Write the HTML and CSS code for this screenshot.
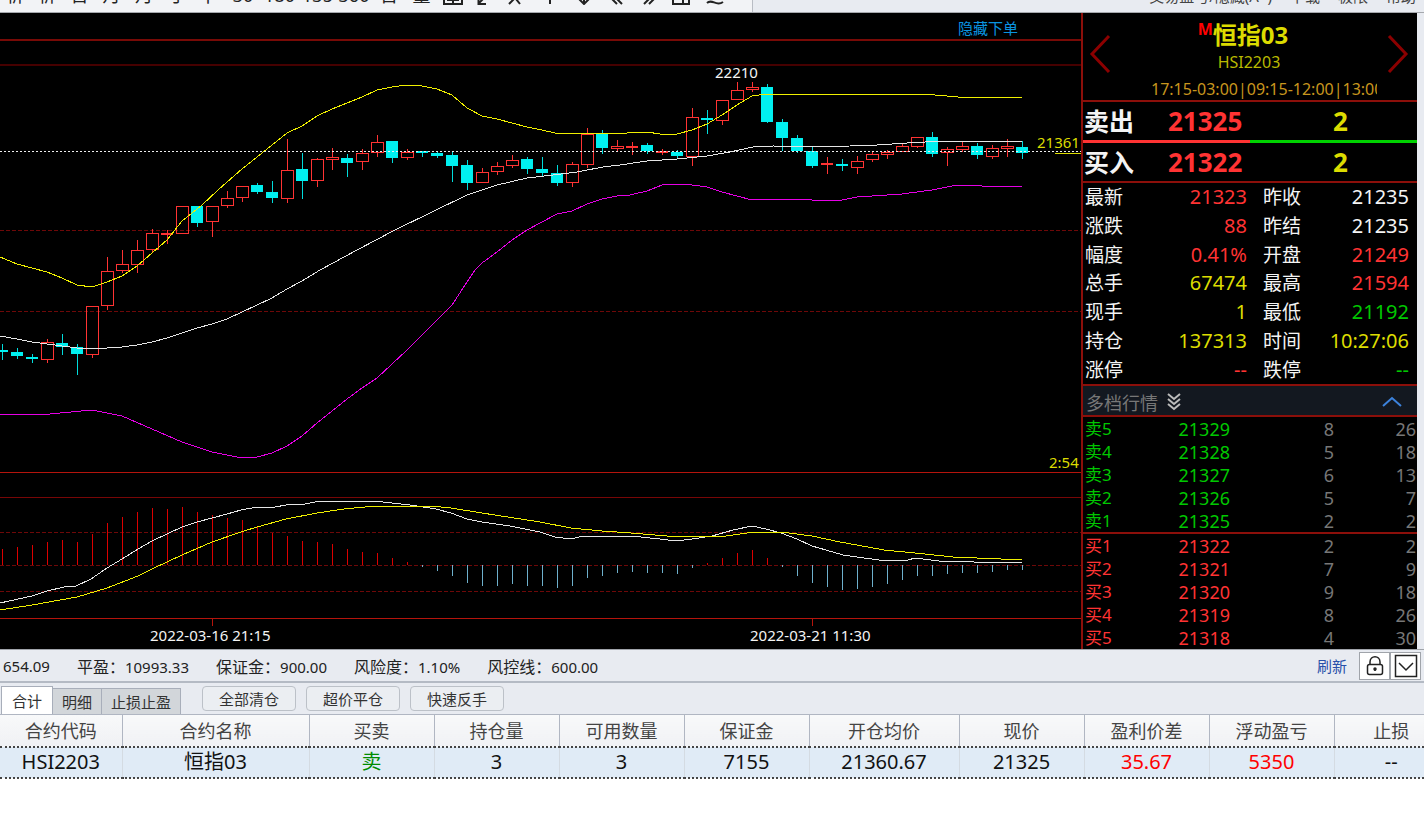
FILE: index.html
```html
<!DOCTYPE html>
<html lang="zh-CN">
<head>
<meta charset="utf-8">
<title>恒指03</title>
<link rel="stylesheet" href="styles.css">
</head>
<body>
<header class="topbar">
  <nav class="tools">
    <button>析</button><button>析</button><button>日</button><button>月</button><button>月</button><button>寸</button><button>十</button>
    <button>30</button><button>180</button><button>135</button><button>360</button><button>日</button><button>量</button>
    <button><svg width="20" height="16"><path d="M1 0V15H19V0M10 0V15M4 11H16"/></svg></button>
    <button><svg width="12" height="14"><path d="M11 3L2 12M1.500 5V13H9"/></svg></button>
    <button><svg width="14" height="14"><path d="M1 13L12 2M8 8L12 13"/></svg></button>
    <button><svg width="8" height="14"><path d="M4 0V13"/></svg></button>
    <button><svg width="12" height="15"><path d="M6 0V14M1 9L6 14L11 9"/></svg></button>
    <button><svg width="12" height="14"><path d="M6 13L1 8L6 3M11 13L6 8L11 3"/></svg></button>
    <button><svg width="12" height="14"><path d="M1 13L6 8L1 3M6 13L11 8L6 3"/></svg></button>
    <button><svg width="18" height="14"><path d="M1 1V13H17V1M11 1V13"/></svg></button>
    <button><svg width="18" height="14"><path d="M1 12C6 7 10 16 17 11"/></svg></button>
  </nav>
  <nav class="menu">
    <a href="#">交易盈亏/隐藏(A+)</a><a href="#">下载</a><a href="#">极限</a><a href="#">帮助</a>
  </nav>
</header>

<main class="market">
  <section class="chart">
    <svg id="chart" viewBox="0 13 1081 636" preserveAspectRatio="xMaxYMin slice" role="img" aria-label="K线图">
      <g class="frame">
        <path class="strong" d="M0 472.500H1081M0 618.500H1081M212.500 619V626M812.500 619V626"/>
        <path class="edge" d="M0 40H1081"/>
        <path class="soft" d="M0 65H1081"/>
        <path class="soft-thin" d="M0 497.500H1081"/>
        <path class="dash" d="M0 230.500H1081M0 311.500H1081M0 532.500H1081M0 565.500H1081M0 591.500H1081"/>
      </g>
      <g id="bars"></g>
      <g id="candles"></g>
      <g id="lines"></g>
      <path class="last" d="M0 151.500H1081"/>
      <path class="mark" d="M1055 153.500H1081"/>
      <text class="t-white" x="715" y="78">22210</text>
      <text class="t-yellow" x="1037" y="148">21361</text>
      <text class="t-yellow" x="1049" y="468">2:54</text>
      <text class="t-blue" x="958" y="34">隐藏下单</text>
      <text class="t-white" x="150" y="641">2022-03-16 21:15</text>
      <text class="t-white" x="750" y="641">2022-03-21 11:30</text>
    </svg>
  </section>

  <aside class="quote">
    <div class="title">
      <button class="arrow" aria-label="上一个"><svg width="24" height="40"><path d="M21 2L4 20L21 38"/></svg></button>
      <div class="names">
        <h1><sup>M</sup>恒指03</h1>
        <p class="code">HSI2203</p>
        <p class="hours">17:15-03:00|09:15-12:00|13:00-16:30</p>
      </div>
      <button class="arrow" aria-label="下一个"><svg width="24" height="40"><path d="M3 2L20 20L3 38"/></svg></button>
    </div>
    <div class="deal"><span>卖出</span><b class="red">21325</b><b class="yellow">2</b></div>
    <div class="ratio"></div>
    <div class="deal"><span>买入</span><b class="red">21322</b><b class="yellow">2</b></div>
    <table class="stats">
      <tr><th>最新</th><td class="red">21323</td><th>昨收</th><td>21235</td></tr>
      <tr><th>涨跌</th><td class="red">88</td><th>昨结</th><td>21235</td></tr>
      <tr><th>幅度</th><td class="red">0.41%</td><th>开盘</th><td class="red">21249</td></tr>
      <tr><th>总手</th><td class="yellow">67474</td><th>最高</th><td class="red">21594</td></tr>
      <tr><th>现手</th><td class="yellow">1</td><th>最低</th><td class="green">21192</td></tr>
      <tr><th>持仓</th><td class="yellow">137313</td><th>时间</th><td class="yellow">10:27:06</td></tr>
      <tr><th>涨停</th><td class="red">--</td><th>跌停</th><td class="green">--</td></tr>
    </table>
    <button class="levels">
      <span>多档行情</span>
      <svg class="more" width="14" height="18"><path d="M1 1L7 6L13 1M1 6L7 11L13 6M1 11L7 16L13 11"/></svg>
      <svg class="fold" width="20" height="12"><path d="M1 10L10 2L19 10"/></svg>
    </button>
    <table class="depth green">
      <tr><th>卖5</th><td>21329</td><td>8</td><td>26</td></tr>
      <tr><th>卖4</th><td>21328</td><td>5</td><td>18</td></tr>
      <tr><th>卖3</th><td>21327</td><td>6</td><td>13</td></tr>
      <tr><th>卖2</th><td>21326</td><td>5</td><td>7</td></tr>
      <tr><th>卖1</th><td>21325</td><td>2</td><td>2</td></tr>
    </table>
    <table class="depth bids red">
      <tr><th>买1</th><td>21322</td><td>2</td><td>2</td></tr>
      <tr><th>买2</th><td>21321</td><td>7</td><td>9</td></tr>
      <tr><th>买3</th><td>21320</td><td>9</td><td>18</td></tr>
      <tr><th>买4</th><td>21319</td><td>8</td><td>26</td></tr>
      <tr><th>买5</th><td>21318</td><td>4</td><td>30</td></tr>
    </table>
  </aside>
</main>

<section class="account">
  <span>654.09</span><span><i>平盈：</i>10993.33</span><span><i>保证金：</i>900.00</span><span><i>风险度：</i>1.10%</span><span><i>风控线：</i>600.00</span>
  <a class="refresh" href="#">刷新</a>
  <div class="keys">
    <button aria-label="锁定"><svg width="18" height="22"><rect x="1.500" y="9.500" width="15" height="10" rx="2"/><path d="M4 9V7C4 0 14 0 14 7V9M9 13V16"/><circle cx="9" cy="14" r="1"/></svg></button>
    <button aria-label="展开"><svg width="24" height="24"><rect x="1.500" y="1.500" width="21" height="21"/><path d="M5 9L12 16L19 9"/></svg></button>
  </div>
</section>

<section class="tabs">
  <button class="tab on">合计</button><button class="tab">明细</button><button class="tab">止损止盈</button>
  <div class="actions"><button>全部清仓</button><button>超价平仓</button><button>快速反手</button></div>
</section>

<table class="positions">
  <colgroup><col class="c-code"><col class="c-name"><col class="c-std"><col class="c-std"><col class="c-std"><col class="c-std"><col class="c-avg"><col class="c-std"><col class="c-std"><col class="c-std"><col></colgroup>
  <thead><tr><th>合约代码</th><th>合约名称</th><th>买卖</th><th>持仓量</th><th>可用数量</th><th>保证金</th><th>开仓均价</th><th>现价</th><th>盈利价差</th><th>浮动盈亏</th><th>止损</th></tr></thead>
  <tbody><tr><td>HSI2203</td><td>恒指03</td><td class="sell">卖</td><td>3</td><td>3</td><td>7155</td><td>21360.67</td><td>21325</td><td class="gain">35.67</td><td class="gain">5350</td><td>--</td></tr></tbody>
</table>
<script src="chart.js"></script>
</body>
</html>
```

FILE: styles.css
```css
* { box-sizing: border-box; }
body { margin: 0; background: #fff; font-family: "Noto Sans", "Noto Sans CJK SC", sans-serif; color: #222; }
button { font: inherit; color: inherit; margin: 0; padding: 0; border: 0; background: none; }
a { color: inherit; text-decoration: none; }
svg { fill: none; stroke: currentColor; }
table { border-collapse: collapse; border-spacing: 0; }
th { font-weight: 400; }
h1, p { margin: 0; }

.red { color: #f33; }
.yellow { color: #dcdc00; }
.green { color: #00c800; }

.topbar { display: flex; justify-content: space-between; height: 13px; overflow: hidden; background: #e8ebf1; border-bottom: 1px solid #a5a8ad; }
.tools {
  display: grid; align-items: end; justify-items: center; align-content: end;
  grid-template-columns: 30px 34px 31px 33px 32px 30px 36px 34px 39px 37px 36px 34px 31px 31px 30px 34px 36px 32px 34px 30px 34px 34px;
  padding: 0 20px 7px 0; background: #f2f3f6; border-right: 1px solid #b8bcc4; font-size: 18px; line-height: 20px; color: #222;
}
.tools svg { display: block; stroke-width: 2; }
.menu { display: flex; align-items: flex-end; gap: 18px; padding: 0 8px 7px 0; font-size: 15px; line-height: 18px; color: #444; }

.market { display: grid; grid-template-columns: minmax(0, 1fr) 336px; padding-right: 7px; background: #e8ebf1; }
.chart { background: #000; }
#chart { display: block; width: 100%; height: 636px; }
.frame, #bars, #candles, #lines, .last, .mark { shape-rendering: crispEdges; }
.strong { stroke: #b4140c; }
.edge { stroke: #780a06; stroke-width: 2; }
.soft { stroke: #460000; stroke-width: 2; }
.soft-thin { stroke: #780606; }
.dash { stroke: #6e0808; stroke-dasharray: 4 2; }
.last { stroke: #eee; stroke-dasharray: 2 2; }
.mark { stroke: #dcdc00; }
#chart text { font-size: 15px; stroke: none; }
#chart .t-white { fill: #f4f4f4; }
#chart .t-yellow { fill: #dcdc00; }
#chart .t-blue { fill: #0a94e0; }
.up { stroke: #f33; }
.flat { fill: #f33; stroke: none; }
.down { fill: #00f0f0; stroke: none; }
.wick-up { stroke: #f33; }
.wick-down { stroke: #00dcdc; }
.gain-bar { stroke: #dc0000; }
.loss-bar { stroke: #6eb0cc; }
.upper, .dea { stroke: #f0f000; }
.middle, .dif { stroke: #e6e6e6; }
.lower { stroke: #e600e6; }

.quote { background: #000; color: #f4f4f4; border-left: 2px solid #8c0f0a; }
.title { display: grid; grid-template-columns: 24px minmax(0, 1fr) 24px; align-items: center; height: 89px; padding: 0 7px 0 5px; border-bottom: 2px solid #8c0f0a; }
.arrow { color: #8c0000; padding-bottom: 5px; }
.arrow svg { display: block; stroke-width: 3; }
.names { text-align: center; }
.names h1 { display: flex; justify-content: center; font-size: 24px; line-height: 32px; color: #dcdc00; padding: 6px 12px 0 0; }
.names sup { font-size: 16px; line-height: 20px; color: #f00; }
.code { font-size: 16px; line-height: 22px; color: #b9b900; }
.hours { margin: 5px 9px 0 39px; font-size: 16px; line-height: 22px; text-align: left; white-space: nowrap; overflow: hidden; color: #c8961e; }
.deal { display: grid; grid-template-columns: 84px 165px 1fr; align-items: center; height: 38px; padding-left: 1px; font-size: 26px; line-height: 36px; }
.deal span { font-size: 25px; font-weight: 700; }
.ratio { height: 3px; background: linear-gradient(to right, #f33 50%, #00d200 50%); }
.stats { width: 100%; height: 205px; table-layout: fixed; border-top: 2px solid #8c0f0a; border-bottom: 2px solid #8c0f0a; font-size: 20px; line-height: 26px; }
.stats th { width: 58px; padding: 0 0 0 2px; text-align: left; font-size: 19px; }
.stats th:nth-child(3) { width: 60px; padding-left: 14px; }
.stats td { padding: 0 2px 0 0; text-align: right; }
.stats td:nth-child(2) { width: 108px; }
.stats td:last-child { padding-right: 8px; }
.levels { display: flex; align-items: center; width: 100%; height: 29px; padding: 2px 15px 0 3px; gap: 9px; background: #131820; color: #777; font-size: 18px; }
.more { color: #bbb; stroke-width: 2; }
.fold { margin-left: auto; color: #3c82dc; stroke-width: 2; }
.depth { width: 100%; height: 117px; table-layout: fixed; border-top: 2px solid #8c0f0a; font-size: 18px; line-height: 22px; }
.depth th { width: 60px; padding: 1px 0 0 2px; text-align: left; font-size: 17px; }
.depth td { padding: 1px 0 0; text-align: right; }
.depth td:nth-child(2) { width: 87px; }
.depth td:nth-child(3) { width: 104px; color: #777; }
.depth td:nth-child(4) { padding-right: 1px; color: #777; }

.account { display: flex; align-items: center; gap: 27px; height: 34px; padding: 0 3px 0 3px; background: #e8ebf1; border-top: 1px solid #a0a4aa; border-bottom: 2px solid #b4bac4; font-size: 15px; }
.account i { font-style: normal; font-size: 16px; }
.refresh { margin-left: auto; color: #2850aa; }
.keys { display: flex; margin-left: -15px; }
.keys button { display: grid; place-items: center; width: 31px; height: 28px; background: #fff; border: 1px solid #a0a4aa; color: #222; }
.keys svg { display: block; stroke-width: 1.500; }

.tabs { display: flex; align-items: flex-end; height: 32px; padding-left: 1px; background: #e8ebf1; border-bottom: 1px solid #b0b6c2; font-size: 15px; }
.tab { height: 26px; padding: 0 9px; background: #d2d6da; border: 1px solid #a8aeba; border-bottom: 0; color: #333; line-height: 24px; }
.tab + .tab { border-left: 0; }
.tab.on { height: 28px; padding: 0 10px; background: #fff; }
.actions { display: flex; gap: 10px; align-self: center; margin-left: 21px; }
.actions button { height: 25px; padding: 0 16px; background: #ebeef2; border: 1px solid #bcc1c8; border-radius: 4px; color: #333; line-height: 22px; }

.positions { width: 100%; table-layout: fixed; text-align: center; }
.c-code { width: 122px; }
.c-name { width: 187px; }
.c-std { width: 125px; }
.c-avg { width: 150px; }
.positions th { height: 32px; padding: 0; background: linear-gradient(#f8f9fa, #f0f1f4); border-right: 1px solid #b0b6c2; color: #444; font-size: 18px; line-height: 26px; }
.positions td { height: 31px; padding: 0 0 2px; background: #e0ebf6; border-right: 1px solid #d4dbe2; color: #111; font-size: 20px; line-height: 26px; }
.positions tbody tr { border-top: 2px dotted #444; border-bottom: 2px dotted #444; }
.positions th:last-child, .positions td:last-child { padding-left: 24px; border-right: 0; }
.positions .sell { color: #008c00; }
.positions .gain { color: #f00; }
```

FILE: chart.js
```js
const NS = "http://www.w3.org/2000/svg";
const STEP = 15;
const FIRST = 2;
const ZERO = 565;

// direction, high, body top, body bottom, low
const candles = [
  "d 344 350 352 360", "d 348 352 356 359", "d 354 357 359 363", "u 339 342 360 363", "d 334 343 347 355",
  "d 344 347 354 375", "u 306 306 355 358", "u 257 271 306 310", "u 250 264 271 273", "u 240 250 265 273",
  "u 229 233 250 252", "f 230 233 235 244", "u 206 206 234 234", "d 206 206 223 227", "u 206 206 222 237",
  "u 191 198 206 208", "u 186 186 198 202", "d 183 185 192 194", "d 181 192 198 203", "u 139 170 199 203",
  "d 153 169 181 199", "u 158 159 181 187", "u 148 157 160 170", "d 154 158 163 177", "u 149 153 162 170",
  "u 135 142 153 157", "d 141 141 158 163", "u 149 152 158 160", "d 151 151 153 157", "d 152 153 156 158",
  "d 151 155 166 182", "d 160 165 183 190", "u 168 172 183 183", "u 162 166 172 175", "u 155 160 166 168",
  "d 157 159 169 174", "d 157 169 173 176", "d 165 173 183 186", "u 162 164 183 187", "u 128 134 165 168",
  "d 130 133 148 154", "u 140 146 149 151", "f 142 146 148 155", "d 143 145 151 154", "f 149 151 153 155",
  "d 150 152 156 158", "u 108 117 157 166", "d 110 118 120 134", "u 100 100 121 125", "u 82 90 100 100",
  "u 82 87 90 92", "d 84 87 122 123", "d 119 122 138 151", "d 135 138 151 153", "d 146 151 166 168",
  "f 157 163 165 174", "d 159 164 166 171", "u 156 161 168 174", "u 151 154 160 162", "u 150 152 155 159",
  "u 143 146 152 152", "u 137 137 147 148", "d 132 137 154 157", "u 147 149 153 166", "u 142 146 150 152",
  "d 143 146 155 159", "u 145 148 157 159", "u 139 146 149 157", "d 141 147 153 159"
];

const macd = [
  549, 547, 545, 542, 540, 542, 534, 523, 517, 512, 508, 509, 507, 512, 515, 518, 520, 527, 533, 536, 541, 542,
  544, 549, 552, 553, 558, 562, 567, 571, 576, 583, 586, 586, 584, 586, 586, 588, 586, 578, 576, 573, 572, 573,
  573, 574, 568, 563, 558, 553, 550, 558, 567, 576, 583, 587, 590, 589, 587, 584, 580, 576, 576, 574, 573, 573,
  572, 570, 570
];

const lines = {
  upper: "0,257 17,264 32,268 47,272 62,278 77,285 92,287 107,282 122,276 137,266 152,253 167,240 182,221 202,205 218,190 242,169 257,157 272,145 287,133 302,126 317,116 332,109 347,103 362,97 377,90 392,87 407,85 422,86 437,89 452,95 467,108 482,116 497,119 512,123 527,127 542,130 555,133 627,133 647,132 660,134 677,134 692,130 707,124 722,115 737,105 752,96 767,94 850,94 935,95 958,97 1022,97",
  middle: "0,336 17,339 32,342 47,344 62,346 77,348 92,349 107,348 122,347 137,345 152,342 167,338 182,333 197,328 212,324 227,319 242,312 257,305 272,298 287,289 302,281 320,270 357,250 395,230 467,195 497,185 527,178 553,175 577,172 603,167 620,165 647,161 677,159 707,156 730,152 753,147 773,146 813,147 850,146 877,145 907,143 943,141 1022,141",
  lower: "0,414 50,414 92,410 122,416 152,429 182,442 212,452 242,458 257,457 272,453 287,446 302,436 317,423 332,411 347,399 362,388 377,378 392,364 407,350 422,335 437,320 452,305 467,282 475,270 482,263 497,252 512,240 527,230 542,222 557,214 572,211 587,204 602,199 617,196 630,195 647,191 662,185 677,184 692,185 707,187 722,192 737,196 752,200 775,199 803,199 812,200 842,200 857,197 887,195 902,194 932,190 947,187 957,185 975,185 982,186 1022,186",
  dif: "0,603 32,596 47,591 64,587 76,586 91,579 107,568 122,559 138,549 152,541 167,534 182,527 197,522 212,518 227,514 241,510 257,507 275,507 286,505 305,504 315,502 333,501 344,502 374,501 392,503 410,505 436,509 451,513 467,519 482,522 510,526 540,532 555,537 571,539 583,536 631,536 660,539 676,541 692,539 712,536 733,530 752,526 766,529 781,533 797,539 812,546 826,550 843,555 857,557 879,560 908,560 915,558 939,561 974,562 1022,562",
  dea: "0,610 32,605 77,597 107,588 138,576 152,569 182,555 212,542 241,532 257,527 286,519 317,513 344,509 375,506 430,506 451,508 482,513 540,522 571,528 602,531 631,533 667,536 726,536 754,532 781,532 812,536 840,542 857,545 884,550 915,553 953,557 1001,559 1022,560"
};

function add(parent, tag, attrs) {
  const node = document.createElementNS(NS, tag);
  for (const key in attrs) node.setAttribute(key, attrs[key]);
  document.getElementById(parent).appendChild(node);
}

macd.forEach((y, i) => {
  const x = FIRST + i * STEP + 0.5;
  add("bars", "path", { class: y < ZERO ? "gain-bar" : "loss-bar", d: `M${x} ${ZERO}V${y}` });
});

candles.forEach((row, i) => {
  const [kind, high, top, bottom, low] = row.split(" ");
  const x = FIRST + i * STEP;
  add("candles", "path", {
    class: kind === "d" ? "wick-down" : "wick-up",
    d: kind === "u" ? `M${x + 0.5} ${high}V${top}M${x + 0.5} ${bottom}V${low}` : `M${x + 0.5} ${high}V${low}`
  });
  if (kind === "u") {
    add("candles", "rect", { class: "up", x: x - 5.5, y: +top + 0.5, width: 12, height: Math.max(bottom - top - 1, 2) });
  } else {
    add("candles", "rect", { class: kind === "d" ? "down" : "flat", x: x - 6, y: top, width: 12, height: bottom - top });
  }
});

for (const name in lines) add("lines", "polyline", { class: name, points: lines[name] });
```
